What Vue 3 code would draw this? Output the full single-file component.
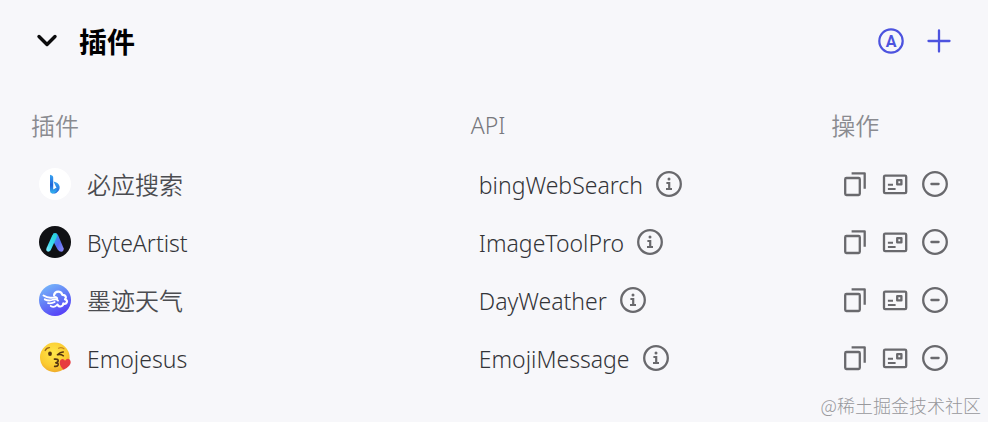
<script setup>
import { ref } from 'vue'

const open = ref(true)
const plugins = [
  { id: 'bing', name: '必应搜索', api: 'bingWebSearch' },
  { id: 'artist', name: 'ByteArtist', api: 'ImageToolPro' },
  { id: 'weather', name: '墨迹天气', api: 'DayWeather' },
  { id: 'emoji', name: 'Emojesus', api: 'EmojiMessage' },
]
const isLatin = (text) => /^[\x20-\x7e]+$/.test(text)
</script>

<template>
  <section class="panel">
    <header class="head">
      <button class="icon-btn toggle" type="button" aria-label="展开" :aria-expanded="open" @click="open = !open">
        <svg width="32" height="32" viewBox="0 0 32 32" fill="none" stroke="currentColor" stroke-width="3.4" stroke-linecap="round" stroke-linejoin="round">
          <path d="M8 11.5 L16 19.5 L24 11.5" />
        </svg>
      </button>
      <h2 class="title">插件</h2>
      <div class="head-actions">
        <button class="icon-btn" type="button" aria-label="自动">
          <svg width="32" height="32" viewBox="0 0 32 32">
            <circle cx="16" cy="16" r="11.7" fill="none" stroke="currentColor" stroke-width="2.2" />
            <text class="auto-letter" x="16" y="21.5" text-anchor="middle">A</text>
          </svg>
        </button>
        <button class="icon-btn" type="button" aria-label="添加">
          <svg width="32" height="32" viewBox="0 0 32 32" fill="none" stroke="currentColor" stroke-width="2.3" stroke-linecap="round">
            <path d="M16 5.5 V26.5 M5.5 16 H26.5" />
          </svg>
        </button>
      </div>
    </header>

    <table v-show="open" class="list">
      <colgroup>
        <col class="col-name" />
        <col class="col-api" />
        <col class="col-ops" />
      </colgroup>
      <thead>
        <tr>
          <th scope="col">插件</th>
          <th scope="col" class="latin">API</th>
          <th scope="col">操作</th>
        </tr>
      </thead>
      <tbody>
        <tr v-for="p in plugins" :key="p.id">
          <td>
            <div class="cell name-cell">
              <svg v-if="p.id === 'bing'" class="logo" viewBox="0 0 32 32">
                <defs>
                  <linearGradient id="bing-stem" x1="0" y1="0" x2="0" y2="1">
                    <stop offset="0" stop-color="#38a5f2" />
                    <stop offset=".55" stop-color="#2163d8" />
                    <stop offset="1" stop-color="#33b7f0" />
                  </linearGradient>
                  <linearGradient id="bing-bowl" x1="0" y1="0" x2="0" y2="1">
                    <stop offset="0" stop-color="#3ba3ee" />
                    <stop offset="1" stop-color="#2467dc" />
                  </linearGradient>
                </defs>
                <circle cx="16" cy="16" r="16" fill="#fff" />
                <path d="M14.5 13.5 Q19.8 14.4 20.6 18.6 Q21.3 22.4 17.2 25 Q13.8 26.5 11.5 24 L17.5 20.1 Z" fill="url(#bing-bowl)" />
                <path d="M11 6.8 Q14.2 7.4 14.2 9.4 V21.5 L17 20 Q19.3 21.7 16.3 24.6 Q11.4 27 11 22.2 Z" fill="url(#bing-stem)" />
              </svg>
              <svg v-else-if="p.id === 'artist'" class="logo" viewBox="0 0 32 32">
                <defs>
                  <linearGradient id="artist-left" x1="1" y1="0" x2="0" y2="1">
                    <stop offset="0" stop-color="#25cfd5" />
                    <stop offset=".6" stop-color="#3bdcf0" />
                    <stop offset="1" stop-color="#8defff" />
                  </linearGradient>
                  <linearGradient id="artist-right" x1="0" y1="0" x2="1" y2="1">
                    <stop offset="0" stop-color="#20aee9" />
                    <stop offset=".55" stop-color="#536cf5" />
                    <stop offset="1" stop-color="#938cf6" />
                  </linearGradient>
                </defs>
                <circle cx="16" cy="16" r="16" fill="#101114" />
                <path d="M14.2 7.6 Q17.4 6 19 9 L24.6 22.2 Q25 25.6 22.2 25.7 Q20.3 25.7 18.8 23.7 L13.4 14 Z" fill="url(#artist-right)" />
                <path d="M13.2 9.5 Q14.5 6.8 17 7.2 Q18.6 8 17.8 11 L11.7 24.2 Q10.6 26 8.6 25.6 Q6.5 24.6 7.6 22.1 Z" fill="url(#artist-left)" />
              </svg>
              <svg v-else-if="p.id === 'weather'" class="logo" viewBox="0 0 32 32">
                <defs>
                  <linearGradient id="sky" x1=".2" y1="0" x2=".7" y2="1">
                    <stop offset="0" stop-color="#76b8fa" />
                    <stop offset=".5" stop-color="#637bf6" />
                    <stop offset="1" stop-color="#563cf8" />
                  </linearGradient>
                </defs>
                <circle cx="16" cy="16" r="16" fill="url(#sky)" />
                <g fill="none" stroke="#fff" stroke-linecap="round" stroke-linejoin="round">
                  <path d="M15 11.2 C16 6.5 22 6.6 23.4 10.8 C27 10.9 27.7 13.6 26 15.2 C30 16.7 27.2 20.8 24.3 19.5 C23.9 23.4 19.2 23.2 18.5 20.5" stroke-width="2.2" />
                  <path d="M4.5 11.5 Q9.5 14.8 14.5 13.3 Q17 12.2 18.2 14.3" stroke-width="1.9" />
                  <path d="M5.8 15.3 Q10 17.6 14.4 15.5 Q18 14.5 19 16.6" stroke-width="1.9" />
                  <path d="M9 19.2 Q13.2 19.7 15.7 18" stroke-width="1.7" />
                  <path d="M11.7 22 Q15 24 17.8 21.2" stroke-width="1.7" />
                </g>
              </svg>
              <svg v-else class="logo" viewBox="0 0 32 32">
                <defs>
                  <radialGradient id="face" cx=".45" cy=".35" r=".7">
                    <stop offset="0" stop-color="#ffe64a" />
                    <stop offset=".65" stop-color="#fbcb31" />
                    <stop offset="1" stop-color="#eda52a" />
                  </radialGradient>
                </defs>
                <circle cx="15.8" cy="15.4" r="14.8" fill="url(#face)" />
                <path d="M6.2 8.5 Q7.6 5.5 10.5 5.6" fill="none" stroke="#9a641b" stroke-width="1.3" stroke-linecap="round" />
                <path d="M19.5 6.3 Q22 4.7 25 6.8" fill="none" stroke="#c68a20" stroke-width="1.1" stroke-linecap="round" />
                <ellipse cx="11" cy="11.8" rx="1.9" ry="2.3" fill="#54330f" />
                <path d="M18.4 12.8 Q21.5 9.8 24.3 10 M19 12.7 Q22 12.2 24.4 13.8" fill="none" stroke="#54330f" stroke-width="1.5" stroke-linecap="round" />
                <path d="M15.5 17.2 Q20 16.8 19 19.4 Q18.5 20.7 16.8 20.8 Q19.6 21 19.1 23 Q18.5 24.8 15.7 24.3" fill="none" stroke="#573711" stroke-width="1.7" stroke-linecap="round" stroke-linejoin="round" />
                <path d="M24.6 27.8 Q20.7 24.5 20.7 20.8 Q20.7 17.5 23.3 17.1 Q25.2 17 26 18.8 Q28.2 15.6 30.6 17.5 Q33 20.3 30.2 23.8 Q28 26.3 24.6 27.8 Z" fill="#e73c3f" />
              </svg>
              <span :class="{ latin: isLatin(p.name) }">{{ p.name }}</span>
            </div>
          </td>
          <td>
            <div class="cell api-cell">
              <span class="latin">{{ p.api }}</span>
              <button class="icon-btn" type="button" :aria-label="`${p.api} 详情`">
                <svg width="32" height="32" viewBox="0 0 32 32" fill="none" stroke="currentColor">
                  <circle cx="16" cy="16" r="11.8" stroke-width="2.3" />
                  <circle cx="16" cy="11" r="1.5" fill="currentColor" stroke="none" />
                  <path d="M13.4 15 H16.2 V20.7 M13 21 H19" stroke-width="2.2" />
                </svg>
              </button>
            </div>
          </td>
          <td>
            <div class="cell">
              <button class="icon-btn" type="button" aria-label="复制">
                <svg width="32" height="32" viewBox="0 0 32 32" fill="none" stroke="currentColor" stroke-width="2.3" stroke-linejoin="round">
                  <rect x="6.2" y="10" width="14.6" height="17" rx="1.2" />
                  <path d="M12.6 5.3 H25.7 V20.7" />
                </svg>
              </button>
              <button class="icon-btn" type="button" aria-label="卡片">
                <svg width="32" height="32" viewBox="0 0 32 32" fill="none" stroke="currentColor" stroke-width="2.3" stroke-linejoin="round">
                  <rect x="5" y="7.6" width="22.2" height="17.6" rx="1.2" />
                  <rect x="18.2" y="12.2" width="4.2" height="4.2" />
                  <path d="M8.9 16.8 H14 M8.9 20.9 H16.6" stroke-width="2" />
                </svg>
              </button>
              <button class="icon-btn" type="button" aria-label="移除">
                <svg width="32" height="32" viewBox="0 0 32 32" fill="none" stroke="currentColor" stroke-width="2.3">
                  <circle cx="16" cy="16" r="11.8" />
                  <path d="M12.4 16 H19.6" stroke-linecap="round" />
                </svg>
              </button>
            </div>
          </td>
        </tr>
      </tbody>
    </table>
    <footer class="credit">@稀土掘金技术社区</footer>
  </section>
</template>

<style>
body {
  margin: 0;
  background: #f7f7fa;
}
</style>

<style scoped>
.panel {
  padding: 0 33px 0 31px;
  color: #4b4c50;
  font-family: "Noto Sans CJK SC", sans-serif;
  font-size: 24px;
  line-height: 32px;
}
.head {
  display: flex;
  align-items: center;
  gap: 16px;
  padding: 25px 0 24px;
}
.title {
  margin: 0;
  color: #000;
  font-size: 28px;
  line-height: 32px;
  font-weight: 700;
}
.head-actions {
  display: flex;
  gap: 16px;
  margin-left: auto;
  color: #4d53df;
}
.auto-letter {
  fill: currentColor;
  font-family: Roboto, "Liberation Sans", sans-serif;
  font-size: 16px;
  font-weight: 700;
}
.icon-btn {
  display: block;
  flex: none;
  width: 32px;
  height: 32px;
  padding: 0;
  border: 0;
  background: none;
  color: #69696d;
  cursor: pointer;
}
.icon-btn svg {
  display: block;
}
.head-actions .icon-btn {
  color: inherit;
}
.toggle {
  color: #0b0b0c;
}
.list {
  width: 100%;
  margin-top: 14px;
  border-collapse: collapse;
  table-layout: fixed;
}
.col-name {
  width: 47.6%;
}
.col-api {
  width: 39%;
}
th {
  height: 60px;
  padding: 0;
  box-sizing: border-box;
  color: #8a8b90;
  font-weight: 350;
  text-align: left;
}
td {
  height: 58px;
  padding: 0 0 0 8px;
  font-weight: 350;
}
.cell {
  display: flex;
  align-items: center;
  gap: 8px;
}
.name-cell {
  gap: 16px;
}
.api-cell {
  gap: 10px;
}
.latin {
  font-family: "Noto Sans", "Open Sans", sans-serif;
  font-size: 23px;
  font-weight: 300;
}
th.latin {
  color: #77787d;
}
.cell .latin {
  padding-top: 2px;
  color: #333438;
}
.credit {
  margin-right: -26px;
  padding: 4px 0 2px;
  color: #98989c;
  font-size: 18px;
  line-height: 28px;
  font-weight: 300;
  text-align: right;
}
.logo {
  flex: none;
  width: 32px;
  height: 32px;
}
</style>
